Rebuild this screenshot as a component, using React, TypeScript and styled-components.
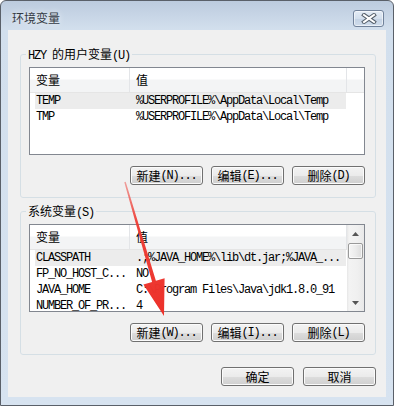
import React from "react";
import styled, { createGlobalStyle } from "styled-components";

const GlobalStyle = createGlobalStyle`
  html, body { margin: 0; padding: 0; background: #ffffff; }
  body {
    font-family: "Noto Sans CJK SC", "Liberation Sans", sans-serif;
    font-size: 12px;
    color: #000;
  }
  * { box-sizing: border-box; }
`;

type Pair = [string, string];

const userVars: Pair[] = [
  ["TEMP", "%USERPROFILE%\\AppData\\Local\\Temp"],
  ["TMP", "%USERPROFILE%\\AppData\\Local\\Temp"],
];

const systemVars: Pair[] = [
  ["CLASSPATH", ".;%JAVA_HOME%\\lib\\dt.jar;%JAVA_..."],
  ["FP_NO_HOST_C...", "NO"],
  ["JAVA_HOME", "C:\\Program Files\\Java\\jdk1.8.0_91"],
  ["NUMBER_OF_PR...", "4"],
];

const Window = styled.div`
  position: relative;
  width: 394px;
  height: 406px;
  border: 1px solid #5a6069;
  border-radius: 6px 6px 0 0;
  background: linear-gradient(#bccbde 0px, #d2dfed 28px, #d7e3f0 100%);
  display: flex;
  flex-direction: column;
  overflow: hidden;
`;

const TitleBar = styled.div`
  height: 29px;
  flex: none;
  display: flex;
  align-items: flex-start;
  justify-content: space-between;
  padding: 0 9px 0 11px;
`;

const Title = styled.div`
  margin-top: 10px;
  line-height: 14px;
  font-size: 12px;
  color: #333a44;
  text-shadow: 0 0 6px rgba(255, 255, 255, 0.9);
`;

const CloseButton = styled.div`
  width: 31px;
  height: 17px;
  margin-top: 9px;
  border: 1px solid #71829a;
  border-radius: 3px;
  background: linear-gradient(#e4ecf6 0%, #d3dfed 50%, #c3d2e4 51%, #cfdceb 100%);
  box-shadow: inset 0 0 0 1px rgba(255, 255, 255, 0.55);
  display: flex;
  align-items: center;
  justify-content: center;
`;

const Client = styled.div`
  flex: 1;
  margin: 0 7px 8px;
  background: #f0f0f0;
  padding: 17px 10px 11px 12px;
  display: flex;
  flex-direction: column;
`;

const Group = styled.fieldset`
  margin: 0;
  min-width: 0;
  padding: 6px 10px 12px 8px;
  border: 1px solid #d5dfe5;
  border-radius: 3px;
  & + & {
    margin-top: 6px;
  }
`;

const Legend = styled.legend`
  height: 14px;
  padding: 0 2px;
  margin-left: -3px;
  display: flex;
  align-items: baseline;
  line-height: 14px;
  font-size: 12px;
  white-space: pre;
`;

const Mono = styled.span`
  font-family: "Liberation Mono", monospace;
  font-size: 12px;
  line-height: 14px;
  letter-spacing: -1.2px;
`;

const ListBox = styled.div`
  height: 88px;
  border: 1px solid #828790;
  background: #ffffff;
  display: flex;
  overflow: hidden;
`;

const ListBody = styled.div`
  flex: 1;
  min-width: 0;
  overflow: hidden;
`;

const Header = styled.div`
  display: flex;
  height: 25px;
  border-bottom: 1px solid #e5e5e5;
  background: linear-gradient(#ffffff 0px, #ffffff 11px, #f3f4f5 12px, #f3f4f5 100%);
`;

const HeaderCell = styled.div<{ $w?: number }>`
  width: ${(p) => (p.$w ? `${p.$w}px` : "auto")};
  flex: ${(p) => (p.$w ? "none" : "1")};
  padding-left: 6px;
  border-right: ${(p) => (p.$w ? "1px solid #e3e5e8" : "none")};
  display: flex;
  align-items: center;
  line-height: 14px;
  font-size: 12px;
`;

const Row = styled.div<{ $selected?: boolean }>`
  display: flex;
  width: 311px;
  height: 16px;
  margin-left: 5px;
  background: ${(p) => (p.$selected ? "#ececec" : "transparent")};
  font-family: "Liberation Mono", monospace;
  font-size: 12px;
  letter-spacing: -1.2px;
  line-height: 16px;
  white-space: nowrap;
`;

const Cell = styled.div<{ $w: number; $pad: number }>`
  width: ${(p) => p.$w}px;
  flex: none;
  padding-left: ${(p) => p.$pad}px;
  overflow: hidden;
`;

const ScrollBar = styled.div`
  width: 17px;
  flex: none;
  display: flex;
  flex-direction: column;
  background: linear-gradient(90deg, #e6e6e6 0px, #f3f3f3 2px, #f0f0f0 60%, #e9e9e9 100%);
`;

const ScrollArrow = styled.div`
  height: 17px;
  flex: none;
  display: flex;
  align-items: center;
  justify-content: center;
`;

const Thumb = styled.div`
  height: 16px;
  margin: 1px 1px 0;
  border: 1px solid #9a9a9a;
  border-radius: 2px;
  background: linear-gradient(90deg, #f6f6f6 0%, #ececec 50%, #dcdcdc 100%);
  box-shadow: inset 0 0 0 1px rgba(255, 255, 255, 0.7);
`;

const Track = styled.div`
  flex: 1;
`;

const ButtonRow = styled.div<{ $gap: number; $top: number }>`
  display: flex;
  justify-content: flex-end;
  gap: ${(p) => p.$gap}px;
  margin-top: ${(p) => p.$top}px;
`;

const Button = styled.button`
  width: 73px;
  height: 19px;
  padding: 0;
  border: 1px solid #707070;
  border-radius: 3px;
  background: linear-gradient(#f3f3f3 0%, #ebebeb 50%, #dddddd 51%, #cfcfcf 100%);
  box-shadow: inset 0 0 0 1px #fbfbfb;
  font-family: "Noto Sans CJK SC", sans-serif;
  font-size: 12px;
  line-height: 14px;
  color: #000;
  display: flex;
  align-items: center;
  justify-content: center;
  white-space: nowrap;
`;

const Annotation = styled.svg`
  position: absolute;
  left: -1px;
  top: -1px;
  pointer-events: none;
`;

const Caption = ({ zh, hot }: { zh: string; hot?: string }) => (
  <>
    {zh}
    {hot && <Mono>{hot}</Mono>}
  </>
);

const VarList = ({ rows, scroll }: { rows: Pair[]; scroll?: boolean }) => (
  <ListBox>
    <ListBody>
      <Header>
        <HeaderCell $w={100}>变量</HeaderCell>
        <HeaderCell $w={217}>值</HeaderCell>
        {!scroll && <HeaderCell />}
      </Header>
      {rows.map(([name, value], i) => (
        <Row key={name} $selected={i === 0}>
          <Cell $w={95} $pad={1}>{name}</Cell>
          <Cell $w={216} $pad={6}>{value}</Cell>
        </Row>
      ))}
    </ListBody>
    {scroll && (
      <ScrollBar>
        <ScrollArrow>
          <svg width="7" height="4" viewBox="0 0 7 4">
            <path d="M0 4 L3.5 0 L7 4 Z" fill="#555" />
          </svg>
        </ScrollArrow>
        <Thumb />
        <Track />
        <ScrollArrow>
          <svg width="7" height="4" viewBox="0 0 7 4">
            <path d="M0 0 L3.5 4 L7 0 Z" fill="#555" />
          </svg>
        </ScrollArrow>
      </ScrollBar>
    )}
  </ListBox>
);

export default function App() {
  return (
    <>
      <GlobalStyle />
      <Window>
        <TitleBar>
          <Title>环境变量</Title>
          <CloseButton>
            <svg width="16" height="11" viewBox="0 0 16 11">
              <path d="M3 2 L13 9 M13 2 L3 9" stroke="#56606c" strokeWidth="4" strokeLinecap="square" />
              <path d="M3 2 L13 9 M13 2 L3 9" stroke="#ffffff" strokeWidth="2" strokeLinecap="square" />
            </svg>
          </CloseButton>
        </TitleBar>
        <Client>
          <Group>
            <Legend>
              <Mono>HZY </Mono>的用户变量<Mono>(U)</Mono>
            </Legend>
            <VarList rows={userVars} />
            <ButtonRow $gap={8} $top={11}>
              <Button><Caption zh="新建" hot="(N)..." /></Button>
              <Button><Caption zh="编辑" hot="(E)..." /></Button>
              <Button><Caption zh="删除" hot="(D)" /></Button>
            </ButtonRow>
          </Group>
          <Group>
            <Legend>
              系统变量<Mono>(S)</Mono>
            </Legend>
            <VarList rows={systemVars} scroll />
            <ButtonRow $gap={8} $top={11}>
              <Button><Caption zh="新建" hot="(W)..." /></Button>
              <Button><Caption zh="编辑" hot="(I)..." /></Button>
              <Button><Caption zh="删除" hot="(L)" /></Button>
            </ButtonRow>
          </Group>
          <ButtonRow $gap={9} $top={12}>
            <Button>确定</Button>
            <Button>取消</Button>
          </ButtonRow>
        </Client>
        <Annotation width="394" height="406" viewBox="0 0 394 406">
          <defs>
            <linearGradient id="shaft" x1="125" y1="182" x2="164" y2="316" gradientUnits="userSpaceOnUse">
              <stop offset="0" stopColor="#ee3b33" stopOpacity="0.45" />
              <stop offset="0.3" stopColor="#ee3b33" stopOpacity="0.95" />
              <stop offset="1" stopColor="#ec3029" />
            </linearGradient>
          </defs>
          <polygon
            points="124.3,182.2 152.1,282 143.4,284.5 164,316 164.6,278.3 155.9,280.8 125.7,181.8"
            fill="url(#shaft)"
          />
        </Annotation>
      </Window>
    </>
  );
}
